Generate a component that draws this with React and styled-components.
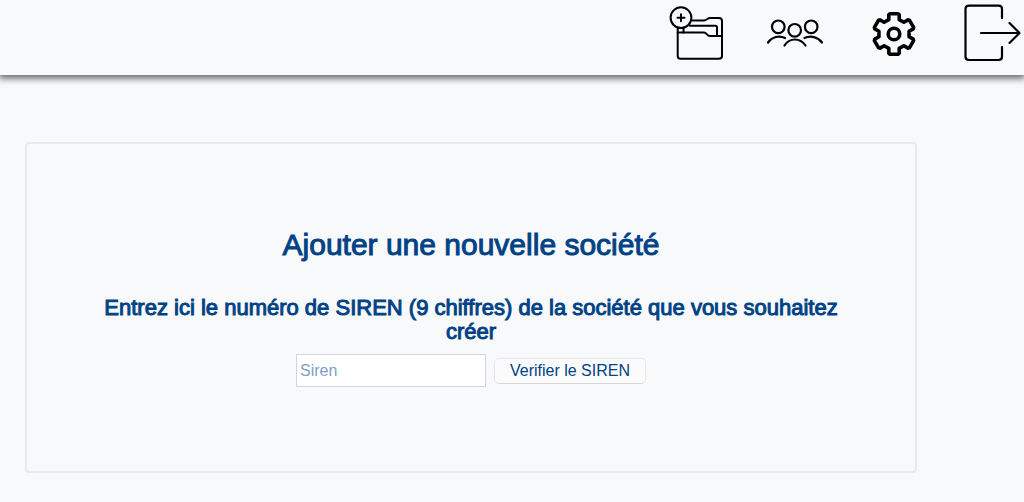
import React, { useState } from 'react';
import styled, { createGlobalStyle } from 'styled-components';

const GlobalStyle = createGlobalStyle`
	* {
		box-sizing: border-box;
	}
	body {
		margin: 0;
		background: #f8f9fb;
		color: #004285;
		font-family: 'Liberation Sans', Helvetica, Arial, sans-serif;
	}
`;

const App = () => {
	const [siren, setSiren] = useState('');

	return (
		<>
			<GlobalStyle />
			<Header>
				<NavLink href="#nouvelle-societe" aria-label="Nouvelle société">
					<Icon viewBox="0 0 60 60">
						<circle cx="13" cy="13.7" r="10.4" />
						<path d="M9.500 13.700h7M13 10.200v7" />
						<path d="M24.500 16.500H36c2.500 0 3.500-2.500 6-2.500h9c2 0 3 1.200 3 3V32" />
						<path d="M22 21.700h25.500q1.500 0 1.500 1.500V32" />
						<path d="M9.700 24v4.500M15.500 24.500v4" />
						<path d="M9.700 28.500H36c2.500 0 3 3.500 6 3.500h12v20q0 2.800-3 2.800H12.500q-2.800 0-2.800-2.800z" />
					</Icon>
				</NavLink>
				<NavLink href="#utilisateurs" aria-label="Utilisateurs">
					<Icon viewBox="0 0 60 60" $stroke={2.2}>
						<circle cx="12.300" cy="22.800" r="6.300" />
						<circle cx="28.700" cy="26.300" r="6.300" />
						<circle cx="45.200" cy="22.800" r="6.300" />
						<path d="M2 38.500C6 33 13 31 19 34" />
						<path d="M18.500 41.500C23.500 33.500 34 33.500 39.500 41.500" />
						<path d="M38.500 34C44.500 31 52 33 56 38.500" />
					</Icon>
				</NavLink>
				<NavLink href="#parametres" aria-label="Paramètres">
					<Icon viewBox="-30 -30 60 60" $stroke={3.6}>
						<path d={gearPath} />
						<circle r="5.800" />
					</Icon>
				</NavLink>
				<NavLink href="#deconnexion" aria-label="Déconnexion">
					<Icon viewBox="0 0 60 60" $stroke={2.2}>
						<path d="M40 14V5q0-3.400-3.400-3.400H7q-3.500 0-3.500 3.400V52.500q0 3.500 3.500 3.500h29.600q3.400 0 3.400-3.500V43" />
						<path d="M19 29h38.500M47.500 19l10 10-10 10" />
					</Icon>
				</NavLink>
			</Header>
			<Card>
				<Title>Ajouter une nouvelle société</Title>
				<Form onSubmit={(e) => e.preventDefault()}>
					<Label htmlFor="siren">
						Entrez ici le numéro de SIREN (9 chiffres) de la société que vous
						souhaitez créer
					</Label>
					<FieldRow>
						<Input
							id="siren"
							placeholder="Siren"
							value={siren}
							onChange={(e) => setSiren(e.target.value)}
						/>
						<Button type="submit">Verifier le SIREN</Button>
					</FieldRow>
				</Form>
			</Card>
		</>
	);
};

export default App;

// one tooth of the gear, repeated every 60 degrees
const tooth = [
	[-5.2, -14.4],
	[-5.2, -19.2],
	[-4.1, -20.3],
	[4.1, -20.3],
	[5.2, -19.2],
	[5.2, -14.4],
];
const gearPoints = [0, 60, 120, 180, 240, 300].flatMap((deg) => {
	const a = (deg * Math.PI) / 180;
	return tooth.map(([x, y]) => [
		(x * Math.cos(a) - y * Math.sin(a)).toFixed(2),
		(x * Math.sin(a) + y * Math.cos(a)).toFixed(2),
	]);
});
const gearPath = `M${gearPoints.map((p) => p.join(' ')).join('L')}Z`;

const Header = styled.header`
	display: flex;
	justify-content: flex-end;
	gap: 38px;
	padding: 4px 2px 11px;
	box-shadow: 0 3px 6px 1px #777;
`;
const NavLink = styled.a`
	display: block;
	color: #000;
`;
const Icon = styled.svg`
	display: block;
	width: 60px;
	height: 60px;
	fill: none;
	stroke: currentColor;
	stroke-width: ${({ $stroke }) => $stroke || 2};
	stroke-linecap: round;
	stroke-linejoin: round;
`;
const Card = styled.main`
	margin: 67px 107px 30px 25px;
	padding: 84px 72px;
	border: 2px solid #e6e8f2;
	border-radius: 4px;
	text-align: center;
`;
const Title = styled.h1`
	margin: 0 0 34px;
	font-size: 30px;
	line-height: 34px;
	font-weight: normal;
	-webkit-text-stroke: 1px;
`;
const Form = styled.form`
	display: flex;
	flex-direction: column;
	align-items: center;
	gap: 10px;
`;
const Label = styled.label`
	font-size: 22px;
	line-height: 24px;
	-webkit-text-stroke: 1px;
`;
const FieldRow = styled.div`
	display: flex;
	align-items: center;
	gap: 8px;
`;
const Input = styled.input`
	width: 190px;
	height: 33px;
	padding: 0 3px;
	border: 1px solid #d4d5d8;
	background: #fff;
	color: inherit;
	font-family: inherit;
	font-size: 16px;
	&::placeholder {
		color: #7f9fc5;
		opacity: 1;
	}
`;
const Button = styled.button`
	height: 26px;
	padding: 0 15px;
	border: 1px solid #e6e7e9;
	border-bottom-color: #d6d7d9;
	border-radius: 5px;
	background: #fbfbfc;
	color: inherit;
	font-family: inherit;
	font-size: 16px;
	line-height: 24px;
`;
